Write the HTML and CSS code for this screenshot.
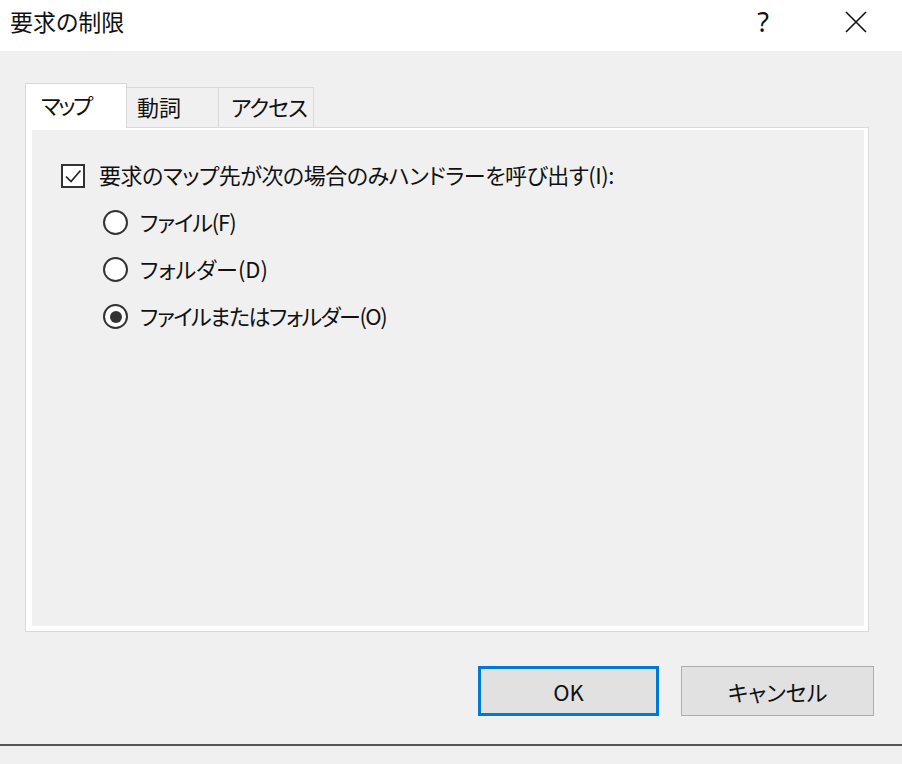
FILE: index.html
```html
<!DOCTYPE html>
<html lang="ja">
<head>
<meta charset="utf-8">
<title>要求の制限</title>
<link rel="stylesheet" href="styles.css">
</head>
<body>
<div class="dialog">
  <div class="titlebar">
    <div class="title">要求の制限</div>
    <div class="title-buttons">
      <span class="help">?</span>
      <svg class="close" width="22" height="22" viewBox="0 0 22 22"><path d="M1 1 L21 21 M21 1 L1 21" stroke="#111" stroke-width="1.6" fill="none"/></svg>
    </div>
  </div>
  <div class="body">
    <div class="tabs">
      <div class="tab active"><span class="tab-map">マップ</span></div>
      <div class="tab t2">動詞</div>
      <div class="tab t3"><span class="tab-access">アクセス</span></div>
    </div>
    <div class="panel">
      <div class="page">
        <div class="row">
          <span class="checkbox"><svg width="20" height="20" viewBox="0 0 20 20"><path d="M3 10.5 L8 15.5 L17.5 4.5" stroke="#222" stroke-width="1.7" fill="none"/></svg></span>
          <span class="label l0">要求のマップ先が次の場合のみハンドラーを呼び出す(I):</span>
        </div>
        <div class="row sub">
          <span class="radio"></span>
          <span class="label l1">ファイル(F)</span>
        </div>
        <div class="row sub">
          <span class="radio"></span>
          <span class="label l2">フォルダー(D)</span>
        </div>
        <div class="row sub">
          <span class="radio checked"></span>
          <span class="label l3">ファイルまたはフォルダー(O)</span>
        </div>
      </div>
    </div>
    <div class="buttons">
      <div class="btn default">OK</div>
      <div class="btn">キャンセル</div>
    </div>
  </div>
  <div class="footer-line"></div>
  <div class="footer"></div>
</div>
</body>
</html>
```

FILE: styles.css
```css
* { box-sizing: border-box; }
html, body { margin: 0; padding: 0; }
body {
  width: 902px;
  height: 764px;
  overflow: hidden;
  background: #f0f0f0;
  font-family: "Noto Sans CJK JP", "Noto Sans", sans-serif;
  font-feature-settings: "palt";
  color: #111;
}
.dialog { width: 902px; height: 764px; display: flex; flex-direction: column; }
.titlebar {
  height: 51px;
  background: #fff;
  display: flex;
  align-items: center;
  justify-content: space-between;
  padding-left: 10px;
}
.title { font-size: 23px; line-height: 1; margin-top: -8px; }
.title-buttons { display: flex; align-items: center; margin-top: -8px; }
.help { font-size: 27px; line-height: 1; font-family: "Noto Sans", sans-serif; margin-right: 76px; }
.close { margin-right: 35px; }

.body { flex: 1; padding: 32px 33px 0 25px; display: flex; flex-direction: column; }
.tabs { display: flex; align-items: flex-end; height: 44px; position: relative; z-index: 1; }
.tab {
  font-size: 22px;
  line-height: 1;
  height: 40px;
  border: 1px solid #d9d9d9;
  border-bottom: none;
  background: #f0f0f0;
  display: flex;
  align-items: center;
  padding-bottom: 3px;
}
.tab.active {
  height: 45px;
  margin-bottom: -1px;
  background: #fff;
  width: 102px;
  padding-left: 15px;
  padding-bottom: 4px;
}
.tab-map { letter-spacing: -2.5px; }
.tab-access { letter-spacing: -1px; }
.tab.t2 { width: 93px; padding-left: 10px; margin-left: -1px; }
.tab.t3 { width: 96px; padding-left: 12px; margin-left: -1px; }

.panel {
  height: 505px;
  border: 1px solid #d9d9d9;
  background: #fff;
  padding: 2px 4px 5px 6px;
}
.page { height: 100%; background: #f0f0f0; padding: 22px 0 0 29px; }
.row { height: 47px; display: flex; align-items: center; }
.row.sub { padding-left: 42px; }
.label { font-size: 22px; line-height: 1; margin-top: -3px; }
.l0 { letter-spacing: -0.45px; }
.l1 { letter-spacing: -1.1px; }
.l2 { letter-spacing: 0; }
.l3 { letter-spacing: -1.5px; }
.checkbox {
  width: 24px; height: 24px;
  border: 2px solid #333;
  background: #fff;
  display: flex; align-items: center; justify-content: center;
  margin-right: 14px;
}
.radio {
  width: 25px; height: 25px;
  border: 2px solid #333;
  border-radius: 50%;
  background: #fff;
  margin-right: 12px;
  display: flex; align-items: center; justify-content: center;
}
.radio.checked::after {
  content: "";
  width: 12px; height: 12px;
  border-radius: 50%;
  background: #333;
}

.buttons { display: flex; justify-content: flex-end; gap: 22px; margin-top: 34px; margin-right: -5px; }
.btn {
  width: 193px; height: 50px;
  border: 1px solid #adadad;
  background: #e1e1e1;
  font-size: 22px;
  display: flex; align-items: center; justify-content: center;
}
.btn.default { width: 181px; border: 3px solid #0078d7; }

.footer-line { height: 2px; background: #555; margin-top: 0; }
.footer { height: 18px; background: #f0f0f0; }
```
